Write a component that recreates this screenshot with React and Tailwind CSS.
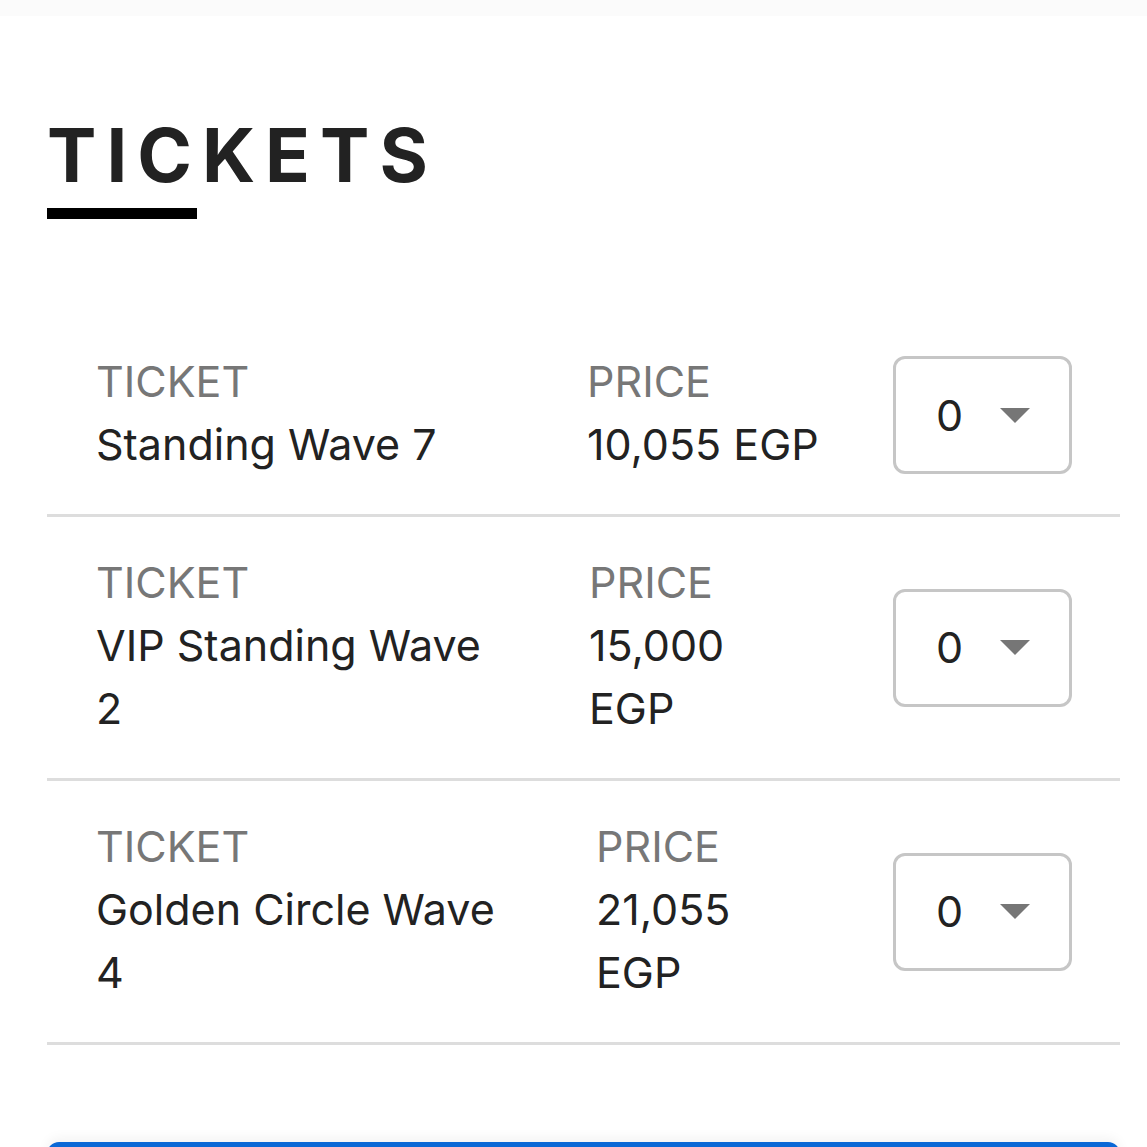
const tickets = [
  {
    name: "Standing Wave 7",
    price: "10,055 EGP",
    nameCls: "w-[491px]",
    priceCls: "w-[250px]",
  },
  {
    name: "VIP Standing Wave 2",
    price: "15,000 EGP",
    nameCls: "w-[493px] pr-[80px]",
    priceCls: "w-[200px]",
  },
  {
    name: "Golden Circle Wave 4",
    price: "21,055 EGP",
    nameCls: "w-[500px] pr-[80px]",
    priceCls: "w-[200px]",
  },
];

function QtySelect() {
  return (
    <div className="ml-auto mt-[4px] flex h-[118px] w-[179px] shrink-0 items-center rounded-[12px] border-[3px] border-[#c6c6c6] bg-white pl-[40px]">
      <span className="text-[43px] leading-none text-[#222]">0</span>
      <svg className="ml-[37px]" width="30" height="15" viewBox="0 0 30 15">
        <path d="M0 0 H30 L15 15 Z" fill="#767676" />
      </svg>
    </div>
  );
}

function TicketRow({ t }) {
  return (
    <div className="flex items-center border-b-[3px] border-[#dddddd] pt-[34px] pb-[38px] pl-[49px] pr-[48px]">
      <div className={t.nameCls}>
        <div className="text-[43px] leading-[63px] text-[#777]">TICKET</div>
        <div className="text-[43px] leading-[63px] text-[#222]">{t.name}</div>
      </div>
      <div className={t.priceCls}>
        <div className="text-[43px] leading-[63px] text-[#777]">PRICE</div>
        <div className="text-[43px] leading-[63px] text-[#222]">{t.price}</div>
      </div>
      <QtySelect />
    </div>
  );
}

export default function App() {
  return (
    <div
      className="relative h-[1147px] w-[1147px] overflow-hidden bg-white"
      style={{ fontFamily: "Inter, 'Noto Sans', sans-serif" }}
    >
      {/* top edge of the sheet */}
      <div className="h-[16px] bg-[#fbfbfb]" />

      <div className="ml-[47px] mr-[27px]">
        <h2 className="mt-[102px] text-[74px] font-bold leading-none tracking-[0.135em] text-[#222]">
          TICKETS
        </h2>
        <div className="mt-[16px] h-[11px] w-[150px] bg-black" />

        <div className="mt-[97px]">
          {tickets.map((t) => (
            <TicketRow key={t.name} t={t} />
          ))}
        </div>

        <button className="mt-[97px] h-[40px] w-full rounded-t-[12px] bg-[#0a68d6] shadow-[0_-4px_12px_rgba(0,0,0,0.05)]" />
      </div>
    </div>
  );
}
